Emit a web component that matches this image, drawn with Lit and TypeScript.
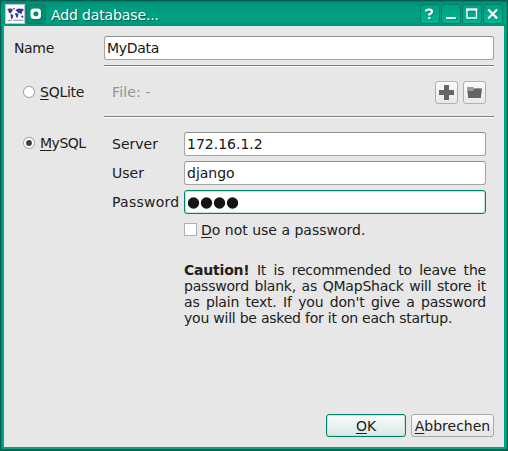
import { LitElement, html, css, svg } from "lit";
import { customElement } from "lit/decorators.js";

@customElement("app-root")
export class AppRoot extends LitElement {
  static styles = css`
    :host { display: block; width: 508px; height: 451px; font: 14px/16px "DejaVu Sans", sans-serif; color: #202020; }
    * { box-sizing: border-box; }
    .window { height: 451px; display: flex; flex-direction: column; background: #00a587; border: 1px solid #005c4e; border-bottom-width: 2px; box-shadow: inset 1px 0 #008c74, inset -1px 0 #009579; padding: 0 3px 2px; }
    .titlebar { height: 25px; margin: 0 -3px; padding: 3px 4px 0 4px; display: flex; background: linear-gradient(#007c67 0, #00957b 2px, #00a284 14px, #00997c 24px, #00856c 25px); }
    .app-icon { width: 20px; height: 20px; background: #fff; border: 1px solid #b9bfe0; flex: none; }
    .app-icon svg, .tb svg { display: block; }
    .app-icon svg { margin: -1px; }
    .tb { width: 20px; height: 20px; flex: none; border: 1px solid #007d68; border-radius: 3px; background: linear-gradient(#009f80, #00b593); margin-left: 1px; }
    .tb svg { margin: -1px; }
    .tb.pin { background: #008e73; }
    .title { flex: 1; color: #fff; padding-left: 5px; line-height: 19px; margin-top: 2px; text-shadow: 1px 1px 1px #00584a; white-space: pre; letter-spacing: -.13px; }
    .buttons { display: flex; }
    .client { flex: 1; background: #e7e7e7; padding: 10px 10px 10px 10px; display: flex; flex-direction: column; }
    .form { display: grid; grid-template-columns: 90px 390px; }
    .label { line-height: 24px; white-space: pre; }
    .name { letter-spacing: -.35px; }
    .wide { letter-spacing: .25px; }
    .field { height: 24px; background: #fff; border: 1px solid #a3a3a3; border-top-color: #8f8f8f; border-radius: 3px; padding: 0 2px; line-height: 22px; color: #151515; white-space: pre; }
    .tight { letter-spacing: -.3px; }
    .focus { border-color: #008269; box-shadow: inset 0 0 0 1px #c5e2dc; }
    .sep { grid-column: 2; height: 2px; background: linear-gradient(#827d7e 50%, #fff 50%); }
    .s1 { margin-top: 5px; }
    .s2 { margin-top: 12px; }
    .radio { display: flex; padding-left: 8px; gap: 4px; height: 20px; line-height: 20px; letter-spacing: -.25px; }
    .dot { width: 14px; height: 14px; margin-top: 3px; flex: none; }
    .r1 { margin-top: 15px; }
    .r2 { margin-top: 15px; letter-spacing: -.5px; }
    u { text-decoration: underline; text-decoration-thickness: 1px; text-underline-offset: 2px; text-decoration-skip-ink: none; }
    .file { display: flex; padding: 0 8px; margin-top: 14px; gap: 5px; color: #949494; line-height: 23px; }
    .file span { flex: 1; letter-spacing: .15px; }
    .tool { width: 23px; height: 23px; border: 1px solid #b1b1b1; border-radius: 3px; background: linear-gradient(#fbfbfb, #e8e8e8); }
    .tool svg { display: block; margin: -1px; }
    .mysql { display: grid; grid-template-columns: 72px 302px; row-gap: 5px; padding-left: 8px; margin-top: 14px; }
    .dots { display: block; margin: 5px 0 0 1px; }
    .check { grid-column: 2; display: flex; gap: 4px; line-height: 16px; margin-top: 3px; height: 16px; }
    .box { width: 13px; height: 13px; border: 1px solid #b0b0b0; background: #fff; margin-top: 1px; }
    .note { grid-column: 2; margin-top: 19px; white-space: nowrap; }
    .line { text-align-last: justify; letter-spacing: -.2px; }
    .last { text-align-last: left; letter-spacing: -.23px; }
    .actions { margin-top: auto; display: flex; justify-content: flex-end; gap: 5px; }
    .btn { height: 23px; line-height: 22px; text-align: center; border: 1px solid #a8a8a8; border-radius: 3px; background: linear-gradient(#fbfbfb, #e5e5e5); width: 83px; white-space: nowrap; }
    .ok { width: 80px; border-color: #008269; background: linear-gradient(#f9fcfb, #d8e8e4); box-shadow: inset 0 0 0 1px #c9e2dc; }
  `;

  private titleButton(shape: unknown, extra = "") {
    return html`<div class="tb ${extra}"><svg width="20" height="20" viewBox="0 0 20 20">
      <g transform="translate(1 1)" stroke="#005f4f" stroke-opacity=".35" fill="none">${shape}</g>
      <g stroke="#fff" fill="none">${shape}</g></svg></div>`;
  }

  private radio(on: boolean) {
    return html`<svg class="dot" viewBox="0 0 14 14"><circle cx="7" cy="7" r="5.600" fill="#fff" stroke="#acacac" stroke-width="1.100"/>
      ${on ? svg`<circle cx="7" cy="7" r="2.900" fill="#3f3f3f"/>` : ""}</svg>`;
  }

  render() {
    return html`<div class="window">
      <div class="titlebar">
        <div class="app-icon"><svg width="20" height="20" viewBox="0 0 20 20">
          <path fill="#34389a" d="M2 5.500L4 4.500h2.500L8 6 7 7.500 6 9 5 9.500 3.500 8 3.500 6.500zM8 4h2l-1 2zM5.500 10l2 .5 1 1.500-1.500 3-1 .5zM10.500 6.500l1.500-1.500 2-.5 4.500.5v1.500l-1.500 1v1.500l-1 1.500-1-1.500-1.500.5-1-1.500zM10.500 9l2 .2 1 1.500-1.200 3.300-1-.5-.3-2-1-.7zM16 12l1.700-.5 1 1.500-1.700 1z"/>
          <path fill="#8588b8" d="M2.500 16h4v1h-4zM8 15.700h10v1H8z"/></svg></div>
        <div class="tb pin"><svg width="20" height="20" viewBox="0 0 20 20">
          <rect x="5" y="5" width="11" height="11" rx="3.500" fill="#005f4f" fill-opacity=".35"/>
          <rect x="4.500" y="4.500" width="10.500" height="10.500" rx="3.500" fill="#fff"/>
          <rect x="7.500" y="7.500" width="4.800" height="4.800" rx="1.800" fill="#008e73"/></svg></div>
        <div class="title">Add database...</div>
        <div class="buttons">
          ${this.titleButton(svg`<path d="M6 7.500Q6 5.500 9 5.500t3 2T9.300 10.200V11.500M9.300 13v2" stroke-width="2.200"/>`)}
          ${this.titleButton(svg`<path d="M5 14h10" stroke-width="2"/>`)}
          ${this.titleButton(svg`<path d="M5 5.500h9.500v8.500H5z" stroke-width="1.400"/><path d="M4.300 5.500h11" stroke-width="2"/>`)}
          ${this.titleButton(svg`<path d="M5.200 5.500l9 9M14.200 5.500l-9 9" stroke-width="2.400"/>`)}
        </div>
      </div>
      <div class="client">
        <div class="form">
          <div class="label name">Name</div><div class="field tight">MyData</div>
          <div class="sep s1"></div>
          <div class="radio r1">${this.radio(false)}<span><u>S</u>QLite</span></div>
          <div class="file"><span>File: -</span>
            <div class="tool"><svg width="23" height="23"><path d="M9 4h5v5h5v5h-5v5H9v-5H4V9h5z" fill="#656565"/></svg></div>
            <div class="tool"><svg width="23" height="23"><path d="M4 6h6l1.500 1.500H17V9H6.500L5 14z" fill="#999"/><path d="M4.500 9.500H10L12 7.500h7l-1.200 9.500H5.200z" fill="#636363"/></svg></div>
          </div>
          <div class="sep s2"></div>
          <div class="radio r2">${this.radio(true)}<span><u>M</u>ySQL</span></div>
          <div class="mysql">
            <div class="label">Server</div><div class="field">172.16.1.2</div>
            <div class="label">User</div><div class="field">django</div>
            <div class="label wide">Password</div><div class="field focus"><svg class="dots" width="52" height="14" fill="#151515">${[6, 19, 32, 45].map(x => svg`<circle cx=${x - 0.5} cy="7" r="5.700"/>`)}</svg></div>
            <div class="check"><div class="box"></div><span><u>D</u>o not use a password.</span></div>
            <div class="note">
              <div class="line"><b>Caution!</b> It is recommended to leave the</div>
              <div class="line">password blank, as QMapShack will store it</div>
              <div class="line">as plain text. If you don't give a password</div>
              <div class="last">you will be asked for it on each startup.</div>
            </div>
          </div>
        </div>
        <div class="actions"><div class="btn ok"><u>O</u>K</div><div class="btn"><u>A</u>bbrechen</div></div>
      </div>
    </div>`;
  }
}
